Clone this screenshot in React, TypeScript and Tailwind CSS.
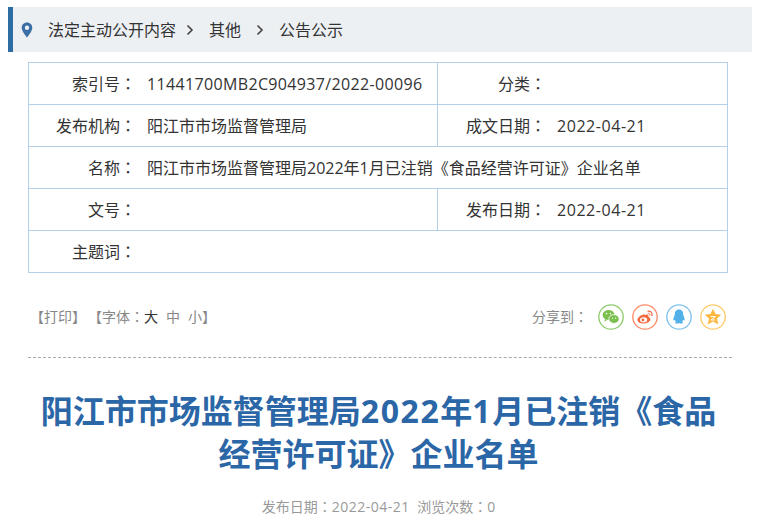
import { Fragment } from "react";

const font = "[font-family:'Open_Sans','Noto_Sans_CJK_SC',sans-serif]";

const crumbs = ["法定主动公开内容", "其他", "公告公示"];

// centred full-width colon, as the reference renders it
const Colon = () => <span className="[font-family:'Noto_Sans_CJK_TC',sans-serif]">：</span>;

const Chevron = ({ second }: { second?: boolean }) => (
  <svg width="8" height="12" viewBox="0 0 8 12" className={second ? "ml-[15px] mr-[15px]" : "ml-[10px] mr-[15px]"}>
    <path d="M1.5 1.5 L6 6 L1.5 10.5" fill="none" stroke="#444" strokeWidth="1.6" />
  </svg>
);

const Row = ({ label, value, label2, value2, last }: { label: string; value?: React.ReactNode; label2?: string; value2?: string; last?: boolean }) => (
  <div className={`flex items-center text-[16px] text-[#333] ${last ? "h-[41px]" : "h-[42px] border-b border-[#b4cfe8]"}`}>
    <div className={`flex h-full items-center ${label2 !== undefined ? "w-[409px] border-r border-[#b4cfe8]" : "flex-1"}`}>
      <div className="w-[107px] shrink-0 text-right whitespace-nowrap">
        {label}
        <Colon />
      </div>
      <div className="ml-[11px] whitespace-nowrap">{value}</div>
    </div>
    {label2 !== undefined && (
      <div className="flex h-full flex-1 items-center">
        <div className="w-[108px] shrink-0 text-right whitespace-nowrap">
          {label2}
          <Colon />
        </div>
        <div className="ml-[11px] whitespace-nowrap tracking-[0.55px]">{value2}</div>
      </div>
    )}
  </div>
);

const ShareCircle = ({ color, children }: { color: string; children: React.ReactNode }) => (
  <svg width="26" height="26" viewBox="0 0 26 26">
    <circle cx="13" cy="13" r="12.2" fill="#fff" stroke={color} strokeWidth="1.3" />
    {children}
  </svg>
);

export default function App() {
  return (
    <div className={`${font} h-[526px] w-[757px] overflow-hidden bg-white`}>
      <div className="pt-[7px] pl-[8px] pr-[5px]">
        <div className="flex h-[45px] items-center border-l-[5px] border-[#2e6da4] bg-[#edf0f3] pl-[8px] text-[16px] text-[#333]">
          <svg width="12" height="16" viewBox="0 0 12 16" className="mr-[15px]">
            <path fillRule="evenodd" d="M6 0.5 C2.9 0.5 0.7 2.8 0.7 5.8 C0.7 9.5 6 15.5 6 15.5 C6 15.5 11.3 9.5 11.3 5.8 C11.3 2.8 9.1 0.5 6 0.5 Z M6 3.6 A2.2 2.2 0 1 1 6 8 A2.2 2.2 0 1 1 6 3.6 Z" fill="#3a6ea5" />
          </svg>
          {crumbs.map((c, i) => (
            <Fragment key={c}>
              {i > 0 && <Chevron second={i === 2} />}
              <span>{c}</span>
            </Fragment>
          ))}
        </div>
      </div>

      <div className="mx-[28px] mt-[10px] w-[700px] border border-[#b4cfe8]">
        <Row label="索引号" value={<span className="tracking-[0.35px]">11441700MB2C904937/2022-00096</span>} label2="分类" value2="" />
        <Row label="发布机构" value="阳江市市场监督管理局" label2="成文日期" value2="2022-04-21" />
        <Row label="名称" value="阳江市市场监督管理局2022年1月已注销《食品经营许可证》企业名单" />
        <Row label="文号" value="" label2="发布日期" value2="2022-04-21" />
        <Row label="主题词" value="" last />
      </div>

      <div className="mt-[30px] flex h-[28px] items-center justify-between pl-[30px] pr-[31px] text-[14px] text-[#888]">
        <div className="flex items-center whitespace-nowrap pb-[1px]">
          <span>【打印】</span>
          <span className="ml-[2px]">【字体<Colon /></span>
          <span className="text-[#333]">大</span>
          <span className="ml-[8px]">中</span>
          <span className="ml-[8px]">小</span>
          <span>】</span>
        </div>
        <div className="flex items-center gap-[8px]">
          <span className="mr-[2px] whitespace-nowrap pb-[1px]">分享到<Colon /></span>
          <ShareCircle color="#8ccb6a">
            <ellipse cx="10.6" cy="11" rx="6" ry="5" fill="#7bbf4f" />
            <path d="M7 15 L6.4 17.6 L9.4 15.8 Z" fill="#7bbf4f" />
            <ellipse cx="16" cy="15" rx="5.2" ry="4.4" fill="#7bbf4f" stroke="#fff" strokeWidth="0.8" />
            <circle cx="8.6" cy="9.6" r="0.8" fill="#fff" />
            <circle cx="12.4" cy="9.6" r="0.8" fill="#fff" />
            <circle cx="14.4" cy="14.2" r="0.6" fill="#fff" />
            <circle cx="17.6" cy="14.2" r="0.6" fill="#fff" />
          </ShareCircle>
          <ShareCircle color="#ff8a65">
            <path d="M11.5 10.5 C7.5 11.5 5 14.5 5.5 16.5 C6 19 9.5 20 13 19.4 C16.5 18.8 18.8 16.8 18.4 14.8 C18.1 13.4 16.6 13.2 16.4 12.8 C16.8 11.4 16.2 10.2 14.2 10.6 L12.6 11.2 C12.8 10.2 12.4 10.2 11.5 10.5 Z" fill="#f4683e" />
            <ellipse cx="11.6" cy="15.8" rx="3.6" ry="2.6" fill="#fff" />
            <circle cx="11" cy="16" r="1.4" fill="#f4683e" />
            <path d="M15.5 7.2 C18.5 6.4 20.8 9 19.8 12" fill="none" stroke="#f4683e" strokeWidth="1.2" />
            <path d="M15.8 9.4 C17.2 9.1 18.2 10.2 17.8 11.6" fill="none" stroke="#f4683e" strokeWidth="1" />
          </ShareCircle>
          <ShareCircle color="#7cc0ec">
            <path d="M13 5.5 C9.8 5.5 8.8 8 8.8 10.4 C8.8 11.4 7.4 13.4 7.3 15.4 C7.3 16.8 8 17 8.8 15.8 C9 16.6 9.4 17.2 9.8 17.7 C8.8 18.1 8.8 19.6 10.8 19.6 C11.8 19.6 12.6 19.2 13 18.9 C13.4 19.2 14.2 19.6 15.2 19.6 C17.2 19.6 17.2 18.1 16.2 17.7 C16.6 17.2 17 16.6 17.2 15.8 C18 17 18.7 16.8 18.7 15.4 C18.6 13.4 17.2 11.4 17.2 10.4 C17.2 8 16.2 5.5 13 5.5 Z" fill="#52b1e8" />
          </ShareCircle>
          <ShareCircle color="#ffc966">
            <path d="M13 4.8 L15.5 10 L21.2 10.7 L17 14.6 L18.2 20.4 L13 17.5 L7.8 20.4 L9 14.6 L4.8 10.7 L10.5 10 Z" fill="#fdb73e" />
            <path d="M10.6 12.6 H15.4 L11 16 H15.2" fill="none" stroke="#fff" strokeWidth="1" />
          </ShareCircle>
        </div>
      </div>

      <div className="mx-[28px] mt-[26px] w-[704px] border-t border-dashed border-[#aaa]" />

      <h1 className="mt-[31px] px-[30px] text-center text-[32px] leading-[43px] font-bold whitespace-nowrap text-[#2b66a6]">
        阳江市市场监督管理局<span className="tracking-[1.6px]">2022</span>年<span className="tracking-[1.6px]">1</span>月已注销《食品
        <br />
        经营许可证》企业名单
      </h1>

      <div className="mt-[21px] text-center text-[14px] whitespace-nowrap text-[#999]">
        发布日期<Colon /><span className="tracking-[0.5px]">2022-04-21</span>&nbsp;&nbsp;浏览次数<Colon />0
      </div>
    </div>
  );
}
